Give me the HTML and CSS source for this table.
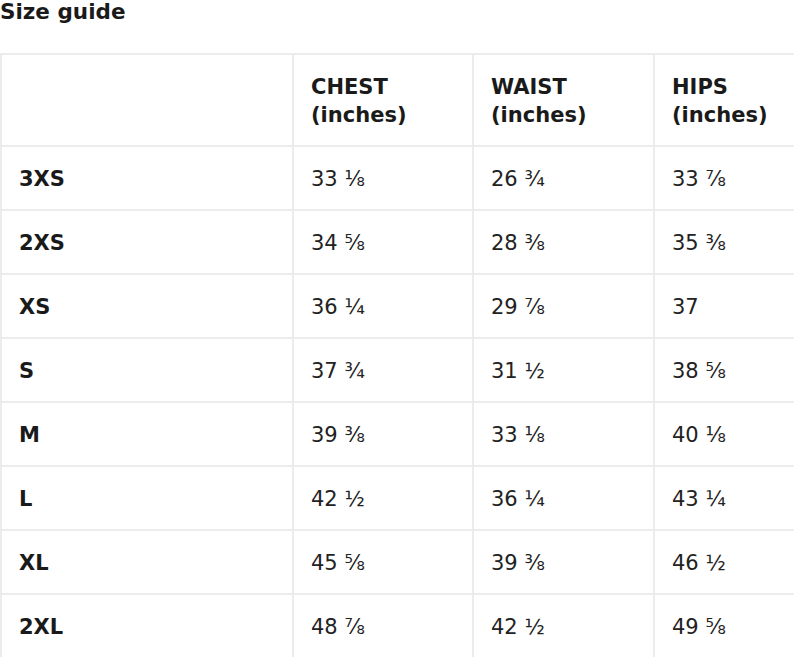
FILE: index.html
```html
<!DOCTYPE html>
<html>
<head>
<meta charset="utf-8">
<link rel="stylesheet" href="styles.css">
</head>
<body>
<h1 class="title">Size guide</h1>
<table class="sizes">
  <colgroup>
    <col class="c-size"><col class="c-a"><col class="c-b"><col class="c-b">
  </colgroup>
  <thead>
    <tr><th></th><th>CHEST<br>(inches)</th><th>WAIST<br>(inches)</th><th>HIPS<br>(inches)</th></tr>
  </thead>
  <tbody>
    <tr><th>3XS</th><td>33 ⅛</td><td>26 ¾</td><td>33 ⅞</td></tr>
    <tr><th>2XS</th><td>34 ⅝</td><td>28 ⅜</td><td>35 ⅜</td></tr>
    <tr><th>XS</th><td>36 ¼</td><td>29 ⅞</td><td>37</td></tr>
    <tr><th>S</th><td>37 ¾</td><td>31 ½</td><td>38 ⅝</td></tr>
    <tr><th>M</th><td>39 ⅜</td><td>33 ⅛</td><td>40 ⅛</td></tr>
    <tr><th>L</th><td>42 ½</td><td>36 ¼</td><td>43 ¼</td></tr>
    <tr><th>XL</th><td>45 ⅝</td><td>39 ⅜</td><td>46 ½</td></tr>
    <tr><th>2XL</th><td>48 ⅞</td><td>42 ½</td><td>49 ⅝</td></tr>
  </tbody>
</table>
</body>
</html>
```
FILE: styles.css
```css
html, body {
  margin: 0;
  padding: 0;
  overflow: hidden;
  background: #fff;
}
body {
  font-family: "DejaVu Sans", sans-serif;
  color: #1a1a1a;
}
.title {
  margin: 0;
  font-size: 21.5px;
  line-height: 24px;
  font-weight: bold;
  padding-bottom: 29px;
}
.sizes {
  border-collapse: collapse;
  table-layout: fixed;
  width: 834px;
  font-size: 21px;
  line-height: 28px;
}
.c-size { width: 292px; }
.c-a { width: 180px; }
.c-b { width: 181px; }
.sizes th, .sizes td {
  border: 2px solid #ececec;
  padding: 18px 18px 16px 17px;
  text-align: left;
  vertical-align: middle;
}
.sizes th { font-weight: bold; }
.sizes td { font-weight: normal; color: #222; }
```
